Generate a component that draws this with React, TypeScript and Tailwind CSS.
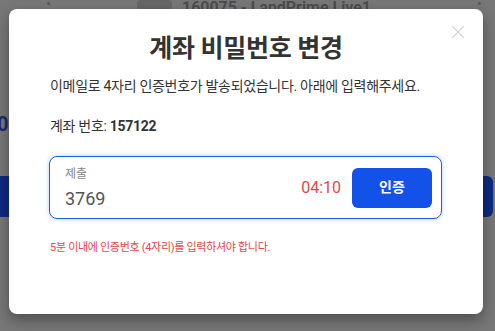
import { X } from "lucide-react";

const font = { fontFamily: "Roboto, 'Noto Sans CJK KR', 'Noto Sans', sans-serif" };

export default function App() {
  return (
    <div className="relative w-[495px] h-[331px] overflow-hidden bg-[#777777]" style={font}>
      {/* page behind the dimmed overlay */}
      <div className="flex items-start pl-[47px] pr-[14px] pt-[2px]">
        <div className="w-[3px] h-[3px] rounded-full bg-[#555]" />
        <div className="flex items-center gap-[10px] -mt-[6px] ml-[87px]">
          <div className="w-[35px] h-[16px] rounded-[4px] bg-[#666]" />
          <span className="text-[16px] font-semibold text-[#4a4a4a]">160075 - LandPrime Live1</span>
        </div>
        <div className="flex-1" />
        <div className="w-[3px] h-[3px] rounded-full bg-[#555]" />
      </div>
      <div className="absolute left-[-3px] top-[109px] text-[20px] font-bold text-[#1a2a6e]">0</div>
      <div className="absolute left-0 top-[176px] w-[12px] h-[41px] bg-[#0d2a80]" />
      <div className="absolute left-[476px] top-[176px] w-[17px] h-[41px] rounded-[6px] bg-[#0d2a80]" />

      {/* modal */}
      <div className="absolute left-[9px] top-[9px] w-[474px] h-[305px] rounded-[8px] bg-white shadow-[0_6px_14px_rgba(0,0,0,0.35)]">
        <button className="absolute right-[14px] top-[12px] text-[#d4d4d4]">
          <X size={22} strokeWidth={1.3} />
        </button>
        <div className="flex flex-col px-[41px] pt-[25px]">
          <h1 className="text-center text-[25px] font-bold text-[#333] leading-[30px] tracking-[-0.3px]">
            계좌 비밀번호 변경
          </h1>
          <p className="mt-[12px] text-[14px] text-[#333] leading-[20px] tracking-[-0.3px]">
            이메일로 4자리 인증번호가 발송되었습니다. 아래에 입력해주세요.
          </p>
          <p className="mt-[20px] text-[14px] text-[#333] leading-[20px] tracking-[-0.3px]">
            계좌 번호: <span className="font-bold">157122</span>
          </p>
          <div className="mt-[20px] -ml-[1px] w-[393px] h-[63px] rounded-[8px] border border-[#1d5fd6] shadow-[0_0_5px_rgba(60,120,230,0.35)] flex items-center pl-[15px] pr-[9px]">
            <div className="flex flex-col flex-1">
              <span className="text-[12px] text-[#888] leading-[16px]">제출</span>
              <span className="mt-[6px] text-[18px] text-[#555] leading-[22px]">3769</span>
            </div>
            <span className="text-[16px] text-[#e04848] mr-[11px]">04:10</span>
            <button className="w-[80px] h-[40px] rounded-[6px] bg-[#1352e8] text-white text-[14px] font-bold">
              인증
            </button>
          </div>
          <p className="mt-[21px] text-[11px] text-[#e04848] leading-[16px] tracking-[-0.3px]">
            5분 이내에 인증번호 (4자리)를 입력하셔야 합니다.
          </p>
        </div>
      </div>
    </div>
  );
}
